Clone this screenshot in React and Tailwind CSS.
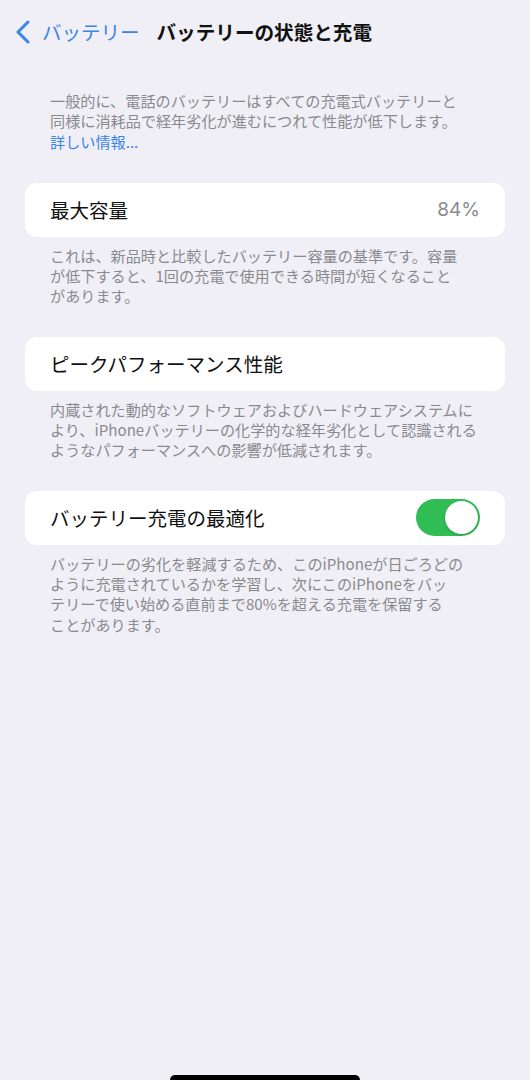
import React from "react";

const jp = { fontFamily: '"Noto Sans CJK JP", "Noto Sans", sans-serif' };

function Footnote({ children }) {
  return (
    <p className="mt-[8px] pl-[50px] pr-[30px] text-[15.15px] leading-[20.3px] text-[#8a8a8e]">
      {children}
    </p>
  );
}

function Card({ children }) {
  return (
    <div className="mx-[25px] flex h-[54px] items-center justify-between rounded-[12px] bg-white pl-[25px] pr-[25px]">
      {children}
    </div>
  );
}

function Toggle() {
  return (
    <div className="relative h-[37px] w-[64px] rounded-full bg-[#31bd55]">
      <div className="absolute right-[2px] top-[2px] h-[33px] w-[33px] rounded-full bg-white shadow-[0_1px_3px_rgba(0,0,0,0.2)]" />
    </div>
  );
}

export default function App() {
  return (
    <div style={jp} className="relative min-h-[1080px] w-full bg-[#f0eff5]">
      {/* navigation bar */}
      <div className="flex h-[64px] items-center pl-[15px]">
        <svg width="17" height="24" viewBox="0 0 17 24" className="mr-[10px]">
          <path d="M13 2 L3 12 L13 22" fill="none" stroke="#3a84ee" strokeWidth="3" strokeLinecap="round" strokeLinejoin="round" />
        </svg>
        <span className="text-[19.5px] leading-none text-[#3a84ee]">バッテリー</span>
        <span className="ml-[17px] text-[19.6px] font-bold leading-none text-[#111]">バッテリーの状態と充電</span>
      </div>

      <p className="mt-[26px] pl-[50px] pr-[30px] text-[15.15px] leading-[20.3px] text-[#8a8a8e]">
        一般的に、電話のバッテリーはすべての充電式バッテリーと
        <br />
        同様に消耗品で経年劣化が進むにつれて性能が低下します。
        <br />
        <span className="text-[#3a84ee]">詳しい情報...</span>
      </p>

      <div className="mt-[32px]">
        <Card>
          <span className="text-[19.5px] text-[#111]">最大容量</span>
          <span className="text-[19px] text-[#8a8a8e]" style={{ fontFamily: '"Inter", "Noto Sans", sans-serif' }}>84%</span>
        </Card>
        <Footnote>
          これは、新品時と比較したバッテリー容量の基準です。容量
          <br />
          が低下すると、1回の充電で使用できる時間が短くなること
          <br />
          があります。
        </Footnote>
      </div>

      <div className="mt-[31px]">
        <Card>
          <span className="text-[19.5px] text-[#111]">ピークパフォーマンス性能</span>
        </Card>
        <Footnote>
          内蔵された動的なソフトウェアおよびハードウェアシステムに
          <br />
          より、iPhoneバッテリーの化学的な経年劣化として認識される
          <br />
          ようなパフォーマンスへの影響が低減されます。
        </Footnote>
      </div>

      <div className="mt-[31px]">
        <Card>
          <span className="text-[19.5px] text-[#111]">バッテリー充電の最適化</span>
          <Toggle />
        </Card>
        <Footnote>
          バッテリーの劣化を軽減するため、このiPhoneが日ごろどの
          <br />
          ように充電されているかを学習し、次にこのiPhoneをバッ
          <br />
          テリーで使い始める直前まで80%を超える充電を保留する
          <br />
          ことがあります。
        </Footnote>
      </div>

      {/* home indicator */}
      <div className="absolute bottom-0 left-[170px] h-[5px] w-[190px] rounded-t-full bg-black" />
    </div>
  );
}
